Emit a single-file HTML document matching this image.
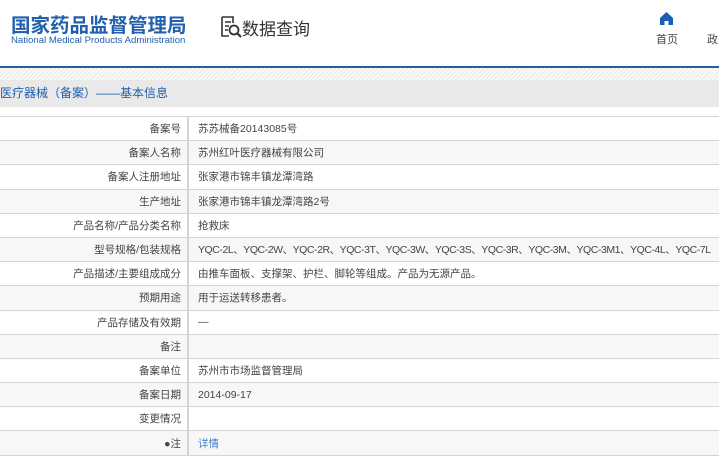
<!DOCTYPE html>
<html><head><meta charset="utf-8"><style>
*{margin:0;padding:0;box-sizing:border-box}
body{width:719px;height:465px;overflow:hidden;background:#fff;font-family:"Liberation Sans","Noto Sans CJK SC",sans-serif;position:relative}
.logo{position:absolute;left:11px;top:9px;font-size:19.5px;font-weight:bold;color:#2160ad;white-space:nowrap}
.en{position:absolute;left:11px;top:35px;font-size:9.6px;color:#2160ad;white-space:nowrap}
.sq{position:absolute;left:220px;top:15px}
.sqt{position:absolute;left:242px;top:15px;font-size:17px;color:#333}
.nav{position:absolute;top:31px;font-size:11px;color:#444}
.line{position:absolute;left:0;top:66px;width:719px;height:2px;background:#23619e}
.hatch{position:absolute;left:0;top:68px;width:719px;height:12px;background:repeating-linear-gradient(135deg,#e8e8e8 0 1px,#fafafa 1px 3px)}
.bar{position:absolute;left:0;top:80px;width:719px;height:27px;background:#e9e9e9;font-size:12px;color:#1d5fae;line-height:27px}
table{position:absolute;left:0;top:116px;width:740px;border-collapse:collapse;font-size:10.5px;color:#444;table-layout:fixed}
td{height:24.2px;border-top:1px solid #d4d4d4;border-bottom:1px solid #d4d4d4;padding:0;white-space:nowrap;overflow:hidden}
td.l{width:188px;text-align:right;padding-right:6px;border-right:2px solid #d4d4d4}
td.v{padding-left:9px}
tr:nth-child(even){background:#f7f7f7}
a{color:#3d7fd0;text-decoration:none}
</style></head><body>
<div class="logo">国家药品监督管理局</div>
<div class="en">National Medical Products Administration</div>
<svg class="sq" width="22" height="24" viewBox="0 0 22 24"><path d="M2 2h11v6M2 2v19h7" fill="none" stroke="#333" stroke-width="1.6"/><path d="M5 7h6M5 11h4M5 15h3" stroke="#333" stroke-width="1.4"/><circle cx="14" cy="15" r="4.5" fill="none" stroke="#333" stroke-width="1.8"/><path d="M17 18l4 4" stroke="#333" stroke-width="2.2"/></svg>
<div class="sqt">数据查询</div>
<svg style="position:absolute;left:660px;top:12px" width="13" height="13" viewBox="0 0 13 13"><path d="M6.5 0L0 6v7h4.5V9h4v4H13V6z" fill="#1a5fb4"/></svg>
<div class="nav" style="left:656px">首页</div>
<div class="nav" style="left:707px">政</div>
<div class="line"></div><div class="hatch"></div>
<div class="bar">医疗器械（备案）——基本信息</div>
<table>
<tr><td class="l">备案号</td><td class="v">苏苏械备20143085号</td></tr>
<tr><td class="l">备案人名称</td><td class="v">苏州红叶医疗器械有限公司</td></tr>
<tr><td class="l">备案人注册地址</td><td class="v">张家港市锦丰镇龙潭湾路</td></tr>
<tr><td class="l">生产地址</td><td class="v">张家港市锦丰镇龙潭湾路2号</td></tr>
<tr><td class="l">产品名称/产品分类名称</td><td class="v">抢救床</td></tr>
<tr><td class="l">型号规格/包装规格</td><td class="v" style="letter-spacing:-0.45px">YQC-2L、YQC-2W、YQC-2R、YQC-3T、YQC-3W、YQC-3S、YQC-3R、YQC-3M、YQC-3M1、YQC-4L、YQC-7L</td></tr>
<tr><td class="l">产品描述/主要组成成分</td><td class="v">由推车面板、支撑架、护栏、脚轮等组成。产品为无源产品。</td></tr>
<tr><td class="l">预期用途</td><td class="v">用于运送转移患者。</td></tr>
<tr><td class="l">产品存储及有效期</td><td class="v">—</td></tr>
<tr><td class="l">备注</td><td class="v"></td></tr>
<tr><td class="l">备案单位</td><td class="v">苏州市市场监督管理局</td></tr>
<tr><td class="l">备案日期</td><td class="v">2014-09-17</td></tr>
<tr><td class="l">变更情况</td><td class="v"></td></tr>
<tr><td class="l">●注</td><td class="v"><a>详情</a></td></tr>
</table>
</body></html>
